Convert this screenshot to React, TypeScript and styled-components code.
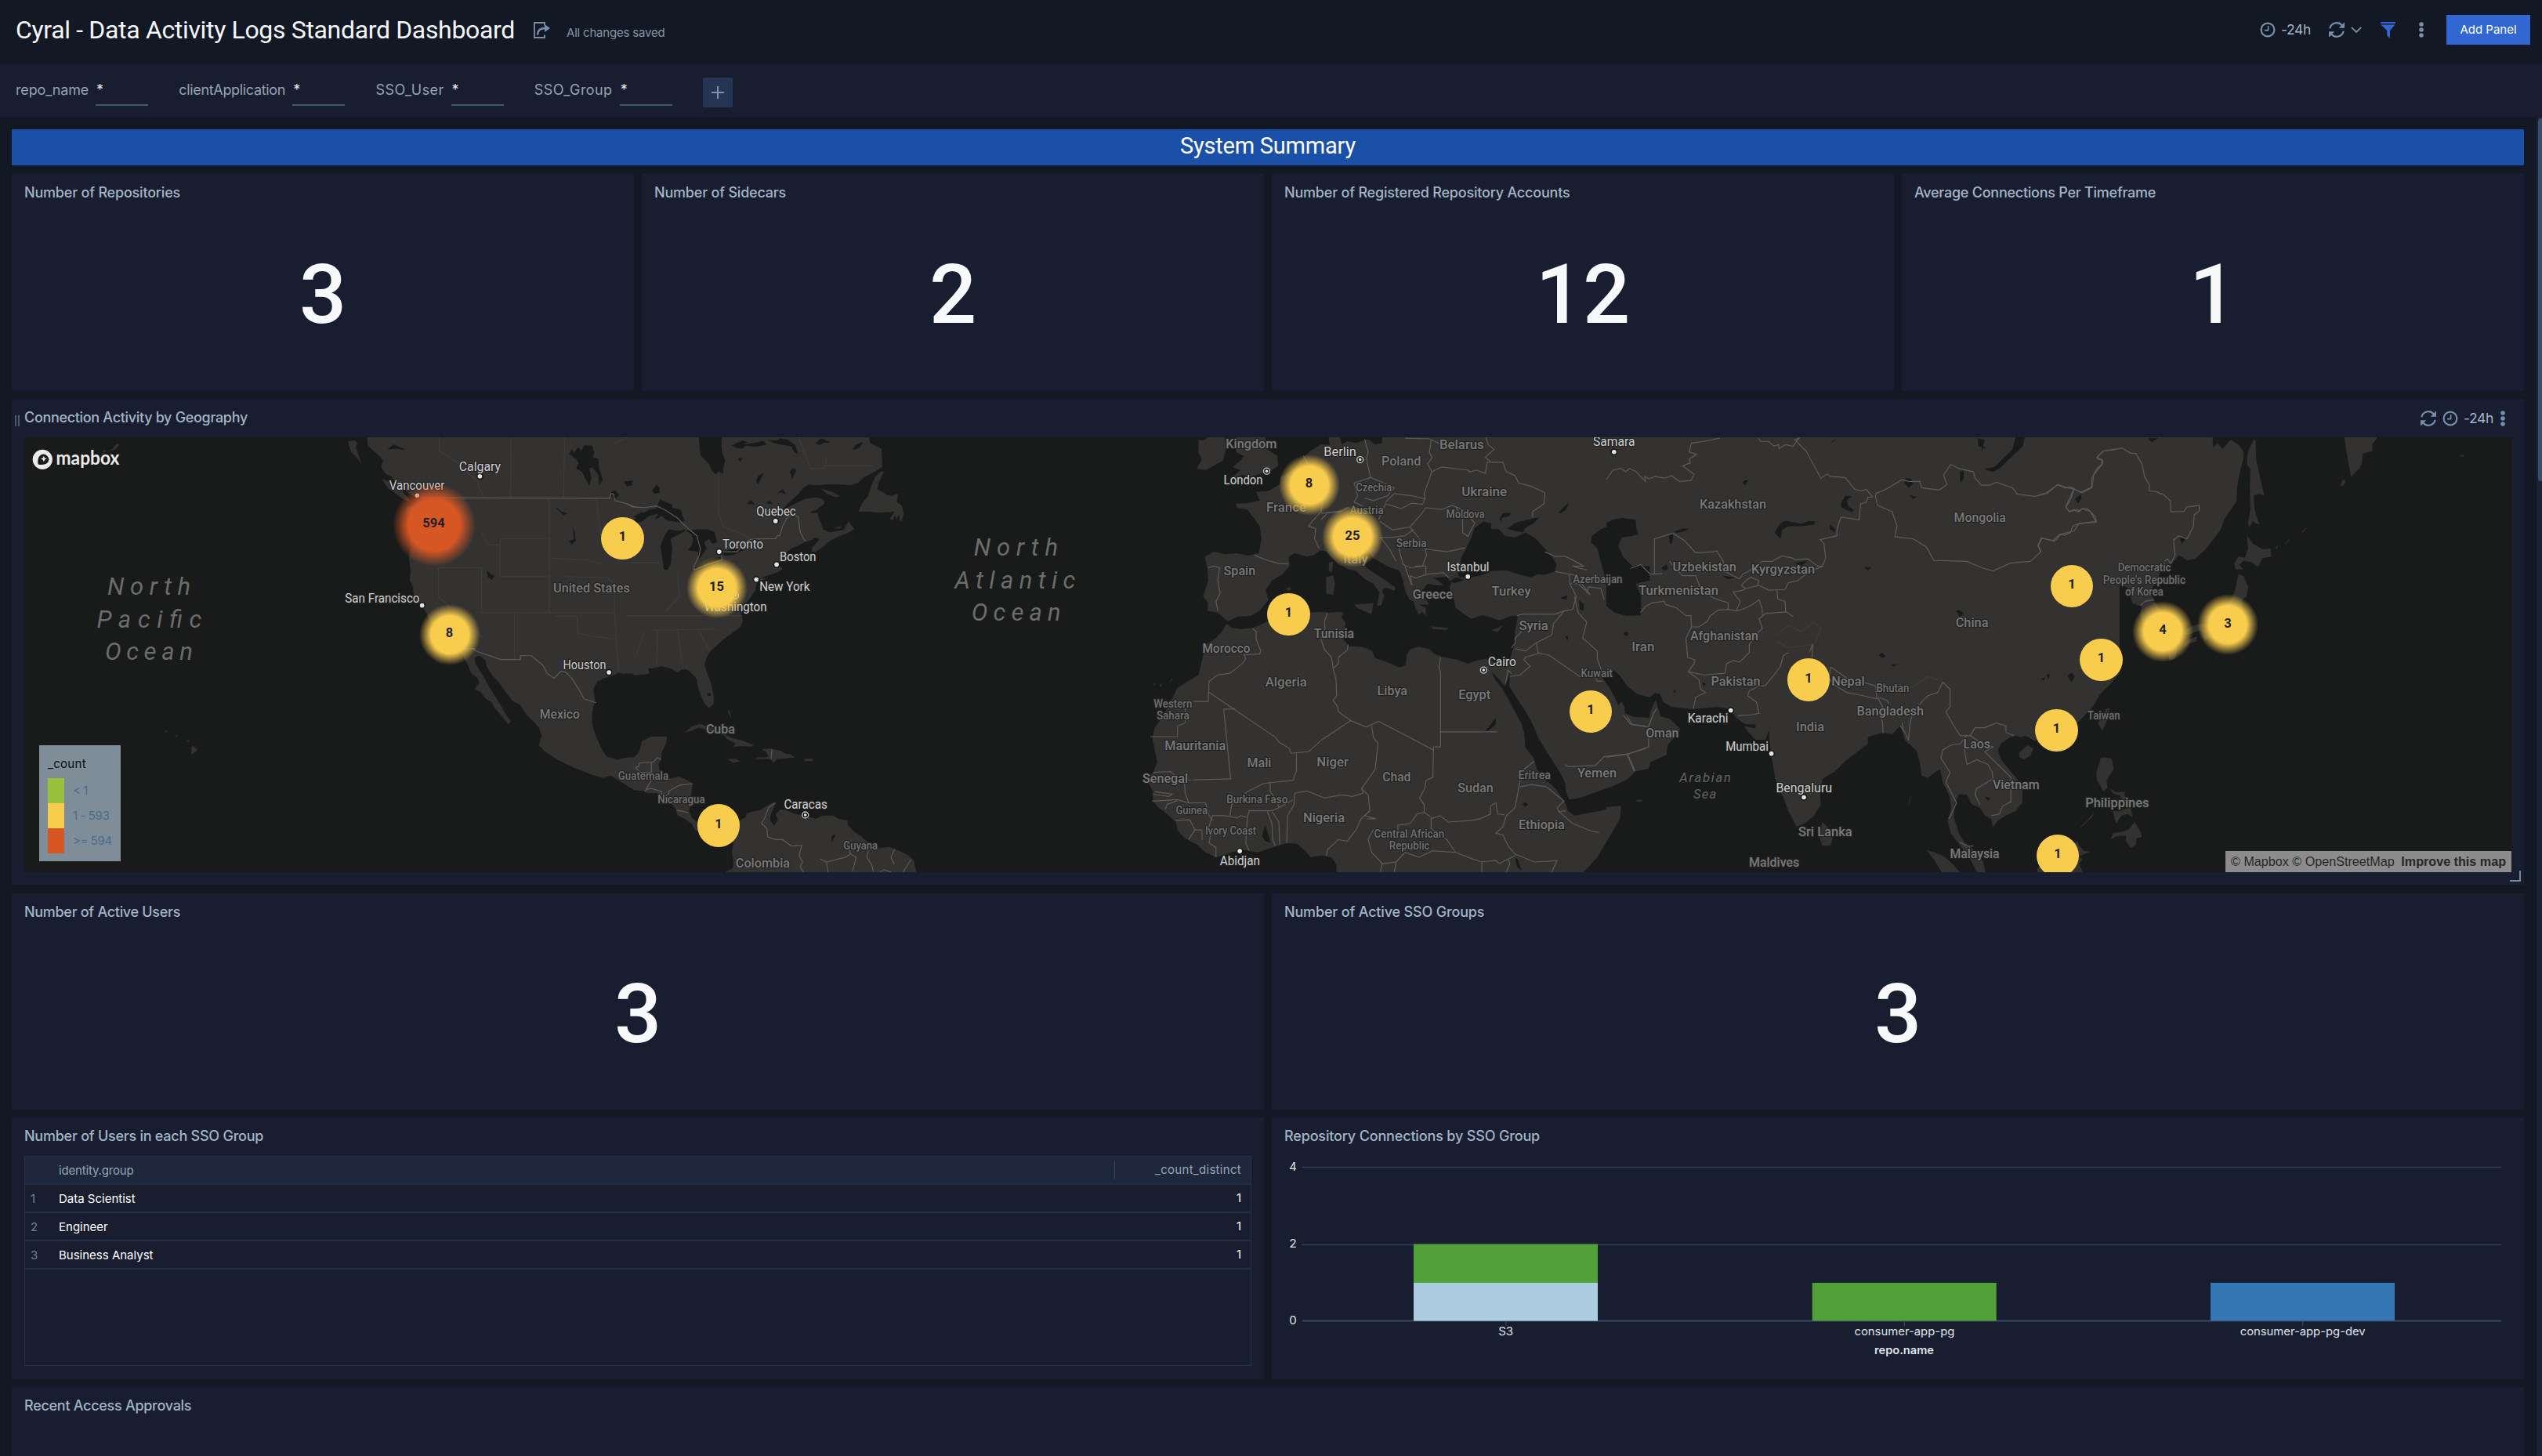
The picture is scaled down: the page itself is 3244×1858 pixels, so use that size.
import React from "react";
import styled, { createGlobalStyle } from "styled-components";

const SANS = `Inter, "Liberation Sans", Arial, sans-serif`;
const c = {
  page: "#121824",
  panel: "#181d2f",
  title: "#a3b5c6",
  icon: "#778fa8",
  blue: "#3266d1",
  water: "#191a1a",
  land: "#343231",
  border: "#5c5b5a",
  yellow: "#f8cc4d",
  orange: "#d75724",
};

const GlobalStyle = createGlobalStyle`
  * { box-sizing: border-box; }
  html, body { margin: 0; background: ${c.page}; }
  body { font-family: ${SANS}; overflow: hidden; }
`;

const Page = styled.div`
  width: 3244px;
  height: 1858px;
  overflow: hidden;
  display: flex;
  flex-direction: column;
  background: ${c.page};
`;

/* ---------- header ---------- */
const Header = styled.header`
  height: 82px;
  flex: none;
  display: flex;
  align-items: center;
  padding: 0 15px 6px 20px;
`;
const Heading = styled.h1`
  margin: 0;
  font-family: Roboto, ${SANS};
  font-size: 32px;
  font-weight: 400;
  line-height: 40px;
  letter-spacing: -0.34px;
  color: #f4f6f9;
  width: 661px;
  white-space: nowrap;
`;
const Saved = styled.span`
  margin: 7px 0 0 21px;
  font-size: 15px;
  line-height: 20px;
  letter-spacing: -0.2px;
  color: #8494a5;
  white-space: nowrap;
`;
const Tools = styled.div`
  margin-left: auto;
  display: flex;
  align-items: center;
`;
const Range = styled.span<{ $w: number }>`
  width: ${(p) => p.$w}px;
  font-size: 17.5px;
  line-height: 22px;
  letter-spacing: -0.4px;
  color: ${c.title};
  white-space: nowrap;
`;
const Icon = styled.svg<{ $mr?: number }>`
  display: block;
  flex: none;
  margin-right: ${(p) => p.$mr ?? 0}px;
  overflow: visible;
`;
const AddPanel = styled.button`
  width: 107px;
  height: 38px;
  padding: 0 0 1px;
  border: 0;
  background: ${c.blue};
  color: #fff;
  font: 400 15px/20px ${SANS};
`;

/* ---------- filters ---------- */
const Filters = styled.div`
  height: 67px;
  flex: none;
  display: flex;
  padding: 17px 0 0 20px;
  background: ${c.panel};
`;
const Filter = styled.label<{ $w: number; $ls: number }>`
  width: ${(p) => p.$w}px;
  display: flex;
  justify-content: space-between;
  margin-right: 39.25px;
  height: 36px;
  font-size: 18px;
  line-height: 32px;
  letter-spacing: ${(p) => p.$ls}px;
  color: #94a3b3;
`;
const FilterValue = styled.span`
  width: 67px;
  border-bottom: 2px solid #3d5a73;
  padding-left: 1px;
  color: #e4e9ee;
`;
const Plus = styled.button`
  width: 38px;
  height: 38px;
  border: 0;
  padding: 0;
  display: flex;
  align-items: center;
  justify-content: center;
  background: #263553;
`;

/* ---------- board ---------- */
const Body = styled.main`
  flex: 1;
  min-height: 0;
  display: flex;
`;
const Board = styled.div`
  flex: 1;
  display: flex;
  flex-direction: column;
  gap: 10px;
  padding: 16px 16px 0 15px;
`;
const Banner = styled.div`
  height: 46px;
  flex: none;
  margin-bottom: 1px;
  background: #1b50a9;
  color: #fff;
  font-family: Roboto, ${SANS};
  font-size: 29px;
  line-height: 43px;
  letter-spacing: -0.23px;
  text-align: center;
`;
const Row = styled.div<{ $h: number; $mb?: number }>`
  height: ${(p) => p.$h}px;
  margin-bottom: ${(p) => p.$mb ?? 0}px;
  flex: none;
  display: flex;
  gap: 10px;
`;
const Panel = styled.section`
  flex: 1 1 0;
  min-width: 0;
  position: relative;
  display: flex;
  flex-direction: column;
  padding: 0 16px;
  background: ${c.panel};
`;
const PanelHead = styled.div`
  height: 49px;
  flex: none;
  display: flex;
  justify-content: space-between;
  padding-bottom: 2px;
`;
const PanelTitle = styled.h2<{ $ls?: number }>`
  margin: 0;
  font-size: 18px;
  font-weight: 500;
  line-height: 47px;
  letter-spacing: ${(p) => p.$ls ?? -0.25}px;
  color: ${c.title};
  white-space: nowrap;
`;
const PanelTools = styled.div`
  display: flex;
  align-items: center;
  padding: 2px 8px 0 0;
`;
const Big = styled.div`
  font-family: Roboto, ${SANS};
  font-size: 106px;
  font-weight: 500;
  line-height: 120px;
  margin-top: 45px;
  text-align: center;
  color: #f7f9fb;
`;
const Track = styled.div`
  width: 7px;
  padding: 2px 0 0 2px;
  background: #1c2236;
`;
const Thumb = styled.div`
  height: 463px;
  border-radius: 4px 0 0 4px;
  background: #34506b;
`;

/* ---------- table ---------- */
const Table = styled.div`
  height: 268px;
  border: 1px solid #24314a;
  font-size: 15px;
`;
const Tr = styled.div<{ $head?: boolean }>`
  display: flex;
  align-items: center;
  height: 36px;
  padding-right: 12px;
  border-bottom: 2px solid #222d43;
  background: ${(p) => (p.$head ? "#1e273b" : "transparent")};
  color: ${(p) => (p.$head ? "#94a5b6" : "#fff")};
`;
const No = styled.span`
  width: 43px;
  padding-left: 7px;
  color: #6f8294;
`;
const Cell = styled.span<{ $ls?: number }>`
  letter-spacing: ${(p) => p.$ls ?? 0}px;
`;
const CountCell = styled.span<{ $head?: boolean }>`
  margin-left: auto;
  width: 162px;
  line-height: 24px;
  letter-spacing: ${(p) => (p.$head ? 0.3 : 0)}px;
  text-align: right;
  border-left: 1px solid ${(p) => (p.$head ? "#34495f" : "transparent")};
`;

/* ---------- map ---------- */
const MapBox = styled.div`
  position: relative;
  height: 555px;
  overflow: hidden;
  background: ${c.water};
`;
const MapSvg = styled.svg`
  display: block;
  width: 3174px;
  height: 555px;
`;
const Pin = styled.div<{ $x: number; $y: number; $r: number; $c: string; $glow: boolean }>`
  position: absolute;
  left: ${(p) => p.$x - 31 - p.$r}px;
  top: ${(p) => p.$y - 558 - p.$r}px;
  width: ${(p) => p.$r * 2}px;
  height: ${(p) => p.$r * 2}px;
  border-radius: 50%;
  background: ${(p) =>
    p.$glow
      ? `radial-gradient(circle closest-side, ${p.$c} 62%, ${p.$c}00 100%)`
      : p.$c};
  display: flex;
  align-items: center;
  justify-content: center;
  padding-bottom: 3px;
  font: 700 16.5px/20px Roboto, ${SANS};
  color: #1d2226;
`;
const Legend = styled.div`
  position: absolute;
  left: 19px;
  bottom: 14px;
  width: 104px;
  height: 148px;
  padding: 13px 11px 0;
  background: #7f8d99;
  font-size: 15px;
  color: #0a0d12;
`;
const LegendTitle = styled.div`
  height: 29px;
  line-height: 22px;
  letter-spacing: 0.3px;
`;
const LegendRow = styled.div<{ $c: string }>`
  height: 32px;
  line-height: 32px;
  padding-left: 11px;
  border-left: 21px solid ${(p) => p.$c};
  letter-spacing: -0.4px;
  color: #4d6b8b;
  white-space: nowrap;
`;
const Credit = styled.div`
  position: absolute;
  right: 0;
  bottom: 0;
  width: 365px;
  height: 27px;
  padding: 0 7px;
  display: flex;
  justify-content: space-between;
  background: #8b8c8b;
  font: 400 16.15px/26px "Liberation Sans", Arial, sans-serif;
  color: #262727;
  white-space: nowrap;
`;
const Logo = styled.svg`
  position: absolute;
  left: 8px;
  top: 13px;
`;
const Grip = styled.span`
  position: absolute;
  left: 4px;
  top: 21px;
  width: 6px;
  height: 14px;
  border: solid #465b70;
  border-width: 0 2px;
`;
const Resize = styled.span`
  position: absolute;
  right: 4px;
  bottom: 4px;
  width: 14px;
  height: 14px;
  border: solid #6f8ba3;
  border-width: 0 2px 2px 0;
`;

/* Each map tile has its own grid: origin x, then horizontal units per pixel. */
type TileKey = "A" | "B" | "C" | "D" | "E";
const KY = 1 / 2.45;
const tiles: Record<TileKey, [number, number]> = {
  A: [0, 820 / 1568],
  B: [800, 700 / 1568],
  C: [1400, 700 / 1568],
  D: [2050, 650 / 1568],
  E: [2600, 644 / 1568],
};
const keys: TileKey[] = ["A", "B", "C", "D", "E"];
const tx = (t: TileKey, x: number) => tiles[t][0] + x * tiles[t][1];
const ty = (y: number) => 500 + y * KY;

const land: Record<TileKey, string[]> = {
  A: [
    "895,130 898,170 906,178 912,185 925,200 935,215 930,235 940,255 955,265 970,290 985,305 1000,320 1015,330 1018,350 1000,360 995,355 992,370 996,400 1000,440 1003,480 998,520 1002,560 1000,590 1008,610 1010,640 1020,660 1030,672 1040,690 1048,715 1060,740 1085,775 1120,810 1130,825 1140,850 1150,880 1165,895 1170,910 1158,930 1175,940 1185,960 1200,970 1208,990 1225,1015 1240,1040 1247,1030 1235,1010 1222,980 1212,960 1200,935 1190,915 1180,890 1170,870 1160,850 1158,830 1170,825 1185,840 1188,860 1200,885 1215,905 1235,940 1250,965 1270,980 1285,1010 1305,1035 1315,1050 1322,1075 1315,1105 1330,1125 1360,1150 1400,1175 1440,1195 1470,1207 1490,1200 1510,1215 1540,1240 1568,1247 1568,1090 1558,1130 1545,1143 1530,1143 1505,1150 1480,1140 1470,1120 1455,1080 1445,1040 1445,1000 1452,965 1448,930 1458,905 1475,895 1500,885 1510,878 1522,882 1540,878 1548,886 1568,884 1568,130",
    "850,155 865,152 873,160 868,172 874,195 883,225 872,208 858,190 852,170",
    "932,272 945,278 965,290 985,315 1003,345 985,337 965,318 948,302 940,290",
    "468,1105 482,1118 475,1128 466,1133",
    "275,178 285,162 292,165 282,180 264,186",
    "248,196 255,180 259,186",
    "402,1060 407,1060 407,1064 402,1064",
    "428,1074 432,1074 432,1079 428,1079",
    "456,1090 462,1090 462,1094 456,1094",
  ],
  B: [
    "0,130 205,130 208,180 212,200 235,225 243,248 255,258 262,248 275,258 275,240 281,215 272,190 270,165 272,130 690,130 695,160 728,178 730,235 700,255 680,265 660,285 640,292 610,290 570,290 545,292 520,290 505,300 490,320 475,335 460,350 445,368 430,388 455,365 480,350 510,335 540,330 560,335 565,350 550,362 540,370 525,375 530,380 545,378 548,395 555,410 560,430 580,440 600,435 620,432 625,420 635,405 640,415 650,428 635,440 610,450 590,460 575,470 560,485 540,500 528,500 530,485 545,470 550,460 540,455 525,465 510,470 490,480 470,490 455,505 440,520 435,540 445,555 430,565 410,572 385,580 400,585 380,590 370,600 368,620 355,640 345,655 335,665 325,690 332,715 325,735 300,755 275,775 250,800 235,815 225,840 222,855 230,880 240,910 248,950 248,975 235,988 222,975 212,950 203,925 200,900 190,885 175,870 160,866 145,877 125,865 100,858 75,864 60,865 65,880 50,885 30,878 0,882",
    "0,1143 20,1145 35,1125 45,1090 70,1078 115,1078 112,1100 100,1125 98,1150 90,1165 95,1185 90,1205 110,1210 150,1203 175,1215 188,1225 185,1250 182,1290 178,1310 185,1330 200,1345 225,1365 240,1376 270,1368 300,1352 340,1330 342,1318 360,1312 380,1308 400,1295 415,1285 425,1285 420,1300 412,1320 410,1340 420,1355 430,1340 425,1320 440,1305 455,1308 470,1315 490,1322 510,1325 540,1335 560,1325 590,1325 605,1335 630,1340 632,1355 650,1375 670,1390 690,1410 700,1425 720,1427 750,1423 780,1435 805,1450 820,1465 830,1515 270,1515 290,1495 303,1490 305,1470 300,1440 305,1410 285,1390 240,1388 210,1378 195,1370 185,1350 165,1335 145,1325 140,1305 125,1285 100,1265 85,1255 60,1255 45,1247 20,1245 0,1222",
    "165,1065 185,1046 210,1038 240,1050 270,1065 300,1082 330,1090 362,1104 355,1110 330,1108 303,1110 312,1100 285,1085 280,1075 250,1065 225,1055 205,1050 185,1060",
    "385,1118 410,1115 440,1123 455,1132 465,1132 480,1143 455,1146 430,1148 420,1160 410,1148 370,1148 368,1143 398,1143 405,1138 396,1124",
    "288,1148 310,1147 325,1155 305,1160",
    "508,1147 532,1147 532,1155 508,1155",
    "725,250 735,250 720,285 715,305 735,315 742,322 755,325 775,320 772,345 785,355 792,380 785,405 778,400 780,382 770,398 766,385 760,402 752,396 765,375 720,378 690,375 662,375 672,350 690,325 700,290 710,265",
    "555,303 580,310 612,327 595,328 570,318",
    "590,427 610,420 612,427",
    "288,992 294,998 298,1022 292,1010",
  ],
  C: [
    "370,725 385,738 410,742 445,738 480,722 515,705 560,700 600,690 640,688 665,690 690,688 705,690 698,705 710,720 708,740 695,755 705,775 720,795 760,798 785,810 795,832 830,845 865,862 882,855 885,825 895,805 920,797 950,805 965,820 985,828 1030,838 1060,850 1085,840 1110,835 1140,845 1165,850 1180,850 1185,880 1176,915 1160,925 1190,985 1200,1010 1215,1040 1222,1070 1224,1110 1250,1145 1258,1180 1290,1215 1310,1240 1330,1270 1342,1290 1345,1308 1365,1325 1400,1318 1440,1310 1470,1300 1498,1294 1495,1335 1460,1400 1430,1455 1380,1515 683,1515 685,1480 670,1455 640,1450 610,1455 595,1435 570,1412 540,1412 500,1425 460,1440 420,1432 380,1442 340,1455 310,1440 285,1415 250,1395 230,1370 225,1345 195,1315 175,1300 160,1280 158,1245 150,1228 140,1210 160,1190 172,1160 165,1120 158,1080 165,1050 190,1010 210,970 230,925 260,905 290,885 300,840 310,790 340,770 360,745",
    "660,130 665,165 640,165 610,185 585,210 570,235 545,255 525,265 522,290 490,310 455,313 465,340 430,348 397,350 400,362 430,368 445,390 465,420 470,460 462,505 430,512 400,505 365,508 335,500 308,515 315,550 318,590 303,640 318,660 315,685 345,690 360,705 375,718 400,703 440,700 465,685 490,650 482,620 500,590 530,570 550,545 548,515 565,505 600,515 620,510 640,495 655,500 690,540 720,555 740,560 765,585 790,600 808,628 800,668 812,668 820,640 815,620 825,612 850,622 853,612 825,590 790,565 765,545 745,515 725,490 735,475 760,480 790,520 830,545 865,560 875,590 880,620 893,650 905,655 910,675 920,697 928,688 940,700 940,675 920,665 950,665 935,640 930,620 945,600 970,605 990,605 975,590 960,582 1000,578 1012,598 1008,610 1010,625 1020,650 1025,675 1050,695 1070,710 1100,698 1125,705 1150,715 1185,700 1203,700 1195,745 1195,780 1185,820 1176,850 1180,885 1178,920 1195,950 1225,1000 1245,1040 1262,1085 1300,1150 1320,1185 1337,1220 1340,1250 1350,1275 1380,1270 1430,1250 1470,1235 1510,1215 1530,1190 1580,1170 1580,130 815,130 815,160 795,165 775,148 740,160 715,155 700,165 690,130",
    "290,150 305,152 330,130 365,130 368,180 360,215 335,230 310,245 285,240 300,210 290,190",
    "395,130 480,130 485,178 515,200 518,230 500,245 470,255 440,265 415,260 385,270 410,245 388,235 410,215 420,200 398,190",
    "662,535 675,530 672,565 663,560",
    "655,580 675,573 680,600 675,635 655,630",
    "735,665 790,660 785,695 745,677",
    "955,733 1005,738 1000,744 960,742",
    "1128,745 1160,732 1145,752",
    "540,617 550,610 556,617 548,622",
    "160,912 168,912 164,920",
    "178,915 186,910 182,925",
    "206,908 216,893 214,903",
    "1542,1276 1560,1276 1558,1281 1545,1281",
  ],
  D: [
    "0,130 1580,130 1580,880 1550,915 1520,945 1500,980 1470,1015 1450,1035 1400,1062 1320,1092 1290,1075 1275,1080 1260,1075 1240,1082 1215,1100 1205,1120 1215,1150 1240,1180 1265,1210 1282,1240 1280,1285 1260,1310 1230,1325 1205,1340 1190,1362 1185,1335 1165,1325 1150,1300 1125,1290 1110,1260 1085,1258 1072,1290 1070,1330 1085,1380 1100,1405 1140,1440 1160,1470 1170,1515 1140,1500 1120,1460 1090,1420 1060,1380 1050,1340 1062,1300 1055,1260 1035,1220 1028,1180 1010,1190 990,1207 970,1200 965,1160 955,1122 920,1090 905,1045 880,1070 850,1065 820,1075 805,1080 805,1100 780,1120 740,1150 705,1185 665,1210 658,1260 660,1290 640,1325 610,1350 585,1360 560,1310 545,1270 520,1210 510,1150 503,1100 500,1058 490,1088 460,1088 435,1062 425,1045 458,1052 460,1040 425,1038 400,1020 385,1000 370,990 340,985 270,992 240,990 200,985 175,970 165,945 150,942 130,958 95,945 60,930 35,910 20,890 0,875",
    "0,925 20,955 38,985 45,965 52,975 55,1003 80,1015 110,1015 135,1000 152,962 158,985 168,1015 195,1022 228,1055 205,1085 188,1105 185,1135 135,1158 130,1178 90,1187 65,1210 30,1220 0,1232",
    "0,1298 44,1294 40,1330 20,1370 0,1405",
    "665,1345 680,1360 697,1395 690,1418 665,1420 655,1390",
    "985,1432 1010,1440 1035,1450 1060,1470 1100,1515 1040,1515 1010,1465",
    "1270,1130 1295,1105 1315,1115 1305,1138 1285,1150 1272,1142",
    "92,1276 110,1276 106,1281 95,1281",
    "930,1300 935,1260 936,1275",
  ],
  E: [
    "0,130 545,130 545,175 560,160 575,178 600,150 625,165 640,185 640,210 632,240 622,290 618,345 600,370 580,400 570,430 545,465 520,495 490,522 465,527 440,510 420,535 395,545 380,568 370,595 350,625 365,655 385,690 400,730 400,765 375,785 340,790 330,760 325,720 320,690 325,672 295,660 290,640 300,620 275,610 255,600 245,615 215,638 210,628 230,605 200,600 175,615 160,640 160,680 178,688 205,668 215,685 240,685 225,692 195,705 165,745 190,780 205,810 225,850 215,905 190,935 175,975 150,1005 110,1035 60,1065 0,1100",
    "655,185 670,155 671,148 678,152 680,210 690,260 705,325 690,318 672,325 675,370 690,415 680,412 670,405 658,425 655,410 662,370 660,300 662,240 652,230 652,205",
    "650,448 670,475 700,492 725,490 727,515 700,520 685,548 665,532 640,528 628,540 640,555 615,555 612,535 625,515 645,518 655,490",
    "625,570 640,575 655,610 650,640 636,650 636,680 625,720 600,760 560,755 520,778 505,745 470,760 450,755 480,732 510,725 540,730 570,700 600,650 615,620 620,590",
    "470,775 495,765 495,780 475,786 455,798 458,785",
    "405,800 430,790 436,805 428,835 410,840",
    "952,130 1060,130 1052,150 1040,165 1042,185 1012,193 1008,225 1000,240 975,265 968,230 960,185",
    "942,295 948,275 958,278 952,292",
    "821,437 836,424 836,427 824,440",
    "768,475 780,463 784,462 772,475",
    "738,492 748,476 746,488",
    "1314,198 1326,198 1324,202 1317,202",
    "215,990 225,990 218,1025 202,1060 188,1035",
    "197,1145 210,1143 232,1148 237,1180 215,1215 218,1238 205,1250 195,1230 185,1215 183,1190",
    "225,1240 245,1252 275,1250 270,1258 285,1290 270,1285 255,1262 235,1256",
    "235,1310 255,1312 270,1305 290,1300 295,1330 280,1320 262,1325 245,1350 238,1325",
    "228,1400 235,1380 265,1375 285,1368 302,1345 320,1375 325,1392 308,1395 305,1418 290,1425 275,1405 275,1388 245,1390",
    "127,1367 160,1335 176,1312 170,1330 140,1358",
    "95,1415 125,1405 130,1420 145,1435 167,1437 130,1452 140,1462 130,1475 145,1515 0,1515 0,1490",
  ],
};

const lakes: Record<TileKey, string[]> = {
  A: [
    "1425,167 1445,168 1450,190 1447,205 1460,210 1462,240 1471,275 1462,292 1460,260 1445,235 1438,240 1443,270 1438,293 1430,275 1420,250 1406,240 1412,222 1405,210 1390,195 1395,178 1400,192 1412,172 1418,185",
    "1188,558 1198,570 1207,575 1200,588 1190,578",
    "945,180 960,165 980,175 990,182 970,178",
    "1355,358 1370,375 1386,380 1375,385 1362,370",
    "1398,420 1403,440 1405,465 1396,478 1388,468 1400,460",
    "1522,280 1545,278 1540,292 1530,295",
    "1488,318 1500,308 1512,322 1498,335",
    "1545,390 1568,375 1568,405",
  ],
  B: [
    "10,410 25,395 45,380 65,368 85,365 90,350 95,335 110,345 130,352 130,362 155,370 158,385 165,405 150,408 130,405 110,400 100,388 80,400 90,380 60,390 45,405 20,412",
    "96,480 110,445 120,430 150,435 170,430 160,440 140,450 125,460 130,490 125,540 115,558 105,555 100,510",
    "168,435 200,430 230,430 250,438 258,470 245,475 235,460 220,470 228,490 215,510 207,522 203,500 175,495 185,480 190,465 185,445",
    "192,550 215,535 245,522 270,515 272,525 245,540 215,555 195,560",
    "270,500 300,492 320,490 337,478 332,495 305,510 280,512",
    "300,168 330,152 345,158 330,165 365,160 390,153 400,165 370,172 340,168 330,178 310,175",
    "400,150 430,152 440,145 460,150 480,165 490,195 480,190 470,170 440,165 420,160",
    "540,160 555,145 582,158 560,160 550,168",
    "645,180 655,165 675,157 665,175 648,182",
    "370,280 375,262 392,254 385,268 375,290",
    "465,250 475,238 485,245 478,260 472,275 470,260",
    "430,318 445,303 455,320 440,315",
    "72,308 85,290 94,300 93,316 78,318",
    "0,285 18,290 0,296",
    "343,350 355,338 365,352",
    "400,348 408,340 418,352",
    "318,208 330,205 325,220",
    "230,942 240,942 240,950 232,952",
    "585,1390 598,1382 592,1395 585,1408",
    "410,1330 425,1322 432,1338 420,1357",
  ],
  C: [
    "1040,520 1055,490 1070,455 1080,425 1105,405 1128,412 1125,428 1150,430 1165,450 1195,455 1225,440 1255,460 1280,490 1300,515 1314,540 1308,562 1280,572 1260,570 1240,580 1205,570 1170,558 1130,560 1095,575 1065,580 1035,580 1030,560 1040,535",
    "1150,398 1160,380 1185,378 1175,390 1160,392 1155,405",
    "1172,428 1195,410 1230,400 1264,392 1250,410 1225,425 1218,440 1195,435",
    "1005,595 1025,580 1050,588 1025,598",
    "1415,450 1440,430 1465,418 1475,400 1500,395 1535,400 1540,425 1535,450 1500,455 1490,480 1500,510 1515,530 1530,545 1580,545 1580,590 1540,600 1555,640 1555,698 1515,700 1475,680 1455,655 1455,640 1475,620 1455,600 1450,570 1440,530 1430,490 1412,470",
    "1443,892 1462,870 1480,872 1495,888 1515,920 1545,945 1580,955 1580,1020 1530,1015 1510,1005 1507,985 1500,968 1490,980 1480,955 1462,920",
    "1128,875 1150,900 1166,922 1180,880 1178,920 1195,950 1225,1000 1245,1040 1262,1085 1300,1150 1320,1185 1337,1220 1340,1250 1350,1278 1340,1290 1330,1270 1310,1240 1280,1210 1258,1180 1248,1145 1226,1115 1222,1070 1215,1040 1200,1010 1185,980 1160,930 1138,900",
    "1318,378 1335,360 1350,345 1340,370 1325,380",
    "1325,645 1345,635 1342,650",
    "1378,652 1392,665 1390,685 1380,680",
    "1105,1068 1125,1040 1140,1018 1140,1040 1120,1058",
    "480,1355 490,1385 496,1410 482,1405 472,1390",
    "1195,1455 1204,1465 1213,1497 1200,1485",
    "1216,1292 1222,1282 1232,1290 1224,1298",
    "1338,765 1346,762 1346,778",
    "1508,752 1520,752 1514,762",
  ],
  D: [
    "0,410 20,400 50,395 90,400 92,425 98,447 50,450 30,475 45,500 50,515 80,545 105,540 120,575 120,592 95,590 80,585 82,610 105,650 105,690 60,700 25,690 0,670",
    "192,450 206,442 205,458 200,478 195,470",
    "208,437 235,428 252,428 238,437 215,441",
    "518,440 535,412 550,403 600,412 620,405 642,405 640,415 600,420 560,420 540,432 538,460 525,448",
    "580,535 620,528 600,545",
    "688,415 705,430 703,440 688,428",
    "722,350 735,325 755,325 740,340 745,358 762,370 755,376 725,362",
    "918,285 922,270 938,272 944,288 930,300",
    "930,322 955,328 945,335",
    "1262,130 1290,130 1282,170 1250,200 1210,240 1190,250 1163,242 1195,235 1220,210 1250,180",
    "1088,250 1100,246 1100,270 1090,286",
    "1143,145 1165,150 1160,168 1168,178 1158,175 1158,195 1155,172 1145,170",
    "418,285 425,278 437,275 428,292",
    "1447,332 1462,320 1458,340 1450,348",
    "793,548 818,548 805,558",
    "1076,685 1085,682 1100,692 1088,703",
    "838,822 850,816 860,828 848,832",
    "874,852 894,852 885,860",
    "1420,890 1432,878 1442,890 1432,908",
    "1338,898 1350,893 1348,903",
    "1355,885 1364,882 1360,898",
    "358,575 395,580 375,586",
    "170,550 185,540 190,552 178,560",
    "690,160 708,146 700,155",
    "52,755 62,749 68,760 60,764",
    "1165,1265 1182,1270 1176,1280",
    "205,935 215,930 210,942",
    "295,908 306,912 300,922",
  ],
  E: [
    "345,145 375,145 355,157",
    "118,335 135,322 138,332 126,348",
    "442,455 460,460 450,475",
    "95,890 106,878 116,890 106,908",
    "12,898 22,893 22,902",
    "30,885 38,882 36,898",
  ],
};

const borders: Record<TileKey, string[]> = {
  A: [
    "1018,331 1488,333 1490,318 1497,320 1500,340 1530,350 1550,360 1568,362",
    "1128,805 1158,803 1160,810 1222,837 1270,837 1270,825 1297,825 1325,855 1335,880 1352,896 1368,874 1380,876 1395,895 1415,935 1425,960 1455,972",
  ],
  B: [
    "0,350 15,360 50,362 85,357 110,370 145,395 160,412 180,432 200,450 210,490 207,510 192,545 192,557 230,540 272,525 270,512",
    "275,500 315,500 345,465 360,460 425,459 430,450 437,450 445,420 460,390 475,385 490,390 495,435 505,460 512,467",
    "98,1150 88,1143 75,1158 35,1160 35,1170 25,1175 38,1190 70,1190 70,1160",
    "70,1190 72,1210 55,1243 70,1240 100,1250 100,1258 120,1258 120,1248 150,1230 188,1225",
    "55,1243 52,1250",
    "142,1308 175,1315",
    "425,1285 405,1300 395,1330 385,1350 400,1365 403,1392 425,1400 445,1400 470,1420 500,1418 492,1450 502,1470 495,1485 505,1501",
    "552,1460 570,1470 625,1455 640,1445 630,1420 632,1400",
    "570,1470 575,1501",
    "640,1445 655,1455 645,1501",
    "692,1425 686,1455 700,1480 705,1501",
    "765,1430 755,1455 765,1478",
    "790,1501 812,1462",
    "725,1501 735,1494 755,1501",
    "415,1118 412,1148",
  ],
  C: [
    "450,510 465,518 490,528 520,537 548,538",
    "318,550 335,545 350,550 345,590 352,630 340,655 345,685",
    "545,262 570,290 600,310 645,340 640,375 615,405 605,420 625,428 622,460 635,490",
    "590,200 605,230 600,270 610,300",
    "640,380 700,372 720,360",
    "765,148 775,190 770,210 782,268 735,285 745,325 735,345 760,358",
    "782,268 820,285 850,300 830,325 790,340 765,332",
    "825,345 850,318 900,325 938,335 930,352 900,348 870,365 825,350 805,400",
    "808,405 845,432 895,422 925,385 940,362",
    "700,375 660,378 640,400",
    "955,150 950,190 958,205 945,225 957,250 935,320 938,335",
    "880,145 950,147 985,165",
    "957,250 985,235 1060,245 1065,250 1085,245 1110,255 1115,220 1160,220 1170,250 1195,262 1205,285 1240,295 1280,315 1278,350 1245,375 1245,392",
    "1125,218 1110,205 1135,180 1118,165 1112,142",
    "940,362 985,368 1015,355 1045,368 1080,410 1060,452 1045,440 1045,395 1025,360",
    "895,425 935,475 942,492 1000,500 1052,488",
    "810,455 845,455 880,450 905,430",
    "810,455 835,490 855,530",
    "935,475 942,510 930,545 895,550 875,540 865,500 860,455",
    "880,545 900,605",
    "900,605 895,575 910,582 945,570 990,565 1005,580",
    "910,545 940,545 940,568",
    "1280,500 1310,515 1340,515 1375,535 1390,545 1360,545 1400,558",
    "1310,562 1350,570 1352,600 1370,640 1360,680 1335,685 1310,695 1215,695 1200,700",
    "1352,600 1385,600 1410,635 1380,605 1370,575 1350,570",
    "1400,630 1405,610 1440,615 1450,650",
    "1365,640 1375,690 1400,720 1388,770 1430,810 1430,835 1445,880",
    "1335,685 1305,725 1300,760 1255,785 1225,810 1195,803",
    "1255,785 1262,818 1225,830 1220,838 1238,858 1210,885 1180,890",
    "1262,818 1290,822 1380,890 1425,893 1430,905 1445,905",
    "1185,800 1195,785 1195,770 1215,748",
    "1168,912 1175,870 1185,880",
    "1338,1165 1345,1172 1425,1168 1450,1140 1515,1133 1568,1115",
    "1515,1133 1535,1185",
    "1515,1015 1530,1040 1568,1045",
    "445,740 455,750 455,775 468,810 465,820 420,822 425,835 415,850 380,880 345,885 320,905 318,968 275,968",
    "252,990 252,1035 230,1045 230,1078 152,1078",
    "318,938 510,1080 520,1095 550,1115 555,1130 605,1125 640,1090 725,1028 690,1000 688,985 675,965 685,950 683,900 675,865 670,830 650,805 640,775",
    "658,692 650,720 652,740 640,770",
    "675,865 690,850 690,830 715,808 718,790",
    "395,992 362,992 382,1210 275,1213",
    "160,1190 210,1187 235,1210 270,1215",
    "570,1130 570,1185 560,1215 495,1222 475,1225 430,1250 385,1290 380,1325",
    "982,830 978,860 982,880 982,1110 962,1110 962,1120 805,1030 770,1048 725,1028",
    "982,1063 1145,1063",
    "785,1045 790,1080 803,1100 795,1180 757,1240 760,1255 730,1265 700,1260 650,1270 600,1248 565,1255 563,1290 545,1325 542,1410",
    "755,1240 775,1260 780,1310 765,1325 797,1335 772,1335",
    "962,1110 960,1205 940,1215 937,1240 922,1270 935,1290 935,1315 915,1320 895,1350 860,1355 860,1375",
    "780,1310 755,1335 740,1370 715,1405 690,1400 660,1430 655,1450",
    "790,1368 775,1400 785,1440 815,1475 810,1501",
    "815,1475 855,1470 850,1501",
    "855,1470 880,1440 920,1455 960,1435 1025,1440",
    "935,1315 955,1330 955,1365 1000,1400 1025,1440 1060,1455 1100,1470 1100,1501",
    "955,1335 980,1325 1005,1345 1070,1340 1095,1335 1125,1320 1125,1295 1140,1285 1145,1320 1165,1322",
    "1250,1155 1215,1185 1205,1240 1195,1300 1170,1325 1160,1360 1140,1380 1160,1385 1175,1420 1195,1445 1250,1470 1290,1468 1315,1465 1300,1501",
    "1100,1470 1140,1465 1150,1475 1195,1450",
    "1170,1501 1180,1475 1175,1460",
    "1210,1235 1240,1228 1285,1235 1335,1280 1315,1300 1320,1312 1340,1310",
    "1320,1312 1360,1350 1410,1372 1435,1378",
    "160,1258 205,1265 215,1258 165,1250",
    "158,1280 230,1275 262,1285 252,1255 250,1225 240,1210",
    "262,1285 310,1285 320,1325 330,1340",
    "195,1305 200,1290 230,1278",
    "340,1455 340,1425 320,1410 325,1385 320,1360 330,1325 365,1325 400,1332 410,1325 430,1330 425,1410 435,1435",
    "225,1340 265,1338 280,1370 262,1400",
    "280,1370 300,1370 300,1400",
    "430,1330 435,1310 500,1310 520,1300 515,1280 495,1250 495,1222",
    "487,1312 500,1350 502,1400 510,1420",
    "500,1312 520,1345 522,1415",
    "520,1300 545,1285 560,1275",
  ],
  D: [
    "0,275 20,245 45,240 60,250 70,240 90,248 120,280 118,265 130,272 150,265 180,270 200,262 225,280 260,278 270,258 235,232 258,222 255,210 278,195 255,188 262,160 300,155 350,145",
    "468,145 475,155 500,155 515,170 530,165 532,178 550,165 575,170 585,155 595,143 580,150 615,185 660,270 680,257 690,265 735,268 765,305 785,310 800,305 820,328",
    "820,328 805,330 800,345 783,350 778,400 722,392 710,430 710,450 658,462 670,475 675,520 665,545",
    "828,328 830,318 860,305 910,275 930,280 965,280 970,300 1025,307 1048,290 1038,260 1060,227 1085,240 1130,250 1135,270 1155,292 1180,292 1200,283 1250,300 1265,320 1320,327 1355,315 1390,290 1420,300 1440,305 1465,315 1495,300 1500,260 1525,228 1525,212 1510,205 1530,185 1568,180",
    "1440,305 1430,335 1415,360 1425,375 1440,368 1450,375 1465,365 1490,375 1508,408 1455,412 1440,435 1400,445 1380,467 1340,458 1330,480 1338,500 1305,530 1245,535 1190,560 1155,550 1110,530 1008,527 985,485 945,460 888,453 895,420 880,375 835,355 828,328",
    "148,570 148,460 205,442 240,465 275,503 330,500 340,497 360,530 362,560 410,585",
    "75,552 105,540 135,570 172,568",
    "195,530 205,545 235,575 275,575 290,615 330,645 375,660 375,680",
    "410,585 420,570 440,560 480,530 510,530 540,513 575,520 580,525 620,522 650,545 665,545 660,548 620,565 590,590 560,597 550,618 500,620 470,605 430,615",
    "430,615 415,605 430,590 445,580 470,590 465,605",
    "105,690 120,672 140,660 178,655 182,665 215,675 245,700 260,700 262,735 285,735 310,718 320,700 345,682 375,680 400,685 420,680 450,665 470,650 480,680 480,700",
    "262,735 245,770 250,830 272,838 270,850 252,875 300,885 365,880 370,850 390,840 410,845 440,815 440,790 465,755 480,740 470,710 490,693 555,688 575,703",
    "400,685 412,655 390,625 415,622 430,615",
    "525,620 528,648 550,655 552,690",
    "252,875 285,900 290,930 305,940 275,955 268,990",
    "560,815 545,825 535,860 520,880 490,918 465,922 440,935 435,950 462,970 470,1005 445,1010 405,1012",
    "625,815 635,788 633,830",
    "690,860 740,895 780,905 830,920 832,960 790,950 740,940 700,915 685,895 690,860",
    "838,925 860,915",
    "835,955 850,985 838,1000 850,1030 852,1068",
    "838,955 865,965 870,975",
    "905,1045 920,1065 930,1090 935,1035 945,1000 975,965 990,950 1020,940 1035,908 1058,930 1058,985 1045,1000 1070,1045 1090,1075 1120,1075 1135,1050 1165,1050 1200,1035 1230,1045 1230,1065 1255,1075",
    "910,1035 915,1060",
    "1110,1072 1090,1100 1060,1105 1035,1120 1030,1145 1058,1190 1045,1220 1078,1285 1055,1335",
    "1100,1105 1110,1165 1140,1150 1175,1165 1188,1190 1190,1210 1140,1240 1135,1260 1150,1290",
    "1120,1075 1155,1098 1190,1110 1165,1125 1200,1160 1245,1205 1245,1282 1220,1295 1210,1320 1185,1325",
    "1088,1408 1110,1420 1130,1420",
    "52,1010 75,1040 130,1048 145,1005 155,990",
    "130,1048 130,1110 65,1133 0,1143",
    "65,1133 88,1185",
  ],
  E: [
    "0,325 30,318 63,290 85,300 105,298 135,315 168,298 170,268 185,240 203,225 202,212 187,210 190,200 205,185 263,176 290,192 305,192 325,225 333,265 348,290 348,310 370,312 385,320 388,318 413,340 415,375 455,374 465,360 503,355 503,373 487,385 485,420 465,460 440,450 423,463 428,510 415,537 405,522 395,530",
    "113,305 88,360 100,375 125,368 130,375 140,365 155,365 180,390 183,405 130,412 110,420 103,440 85,448 70,445 48,465 12,457 2,480 10,500",
    "320,668 335,655 362,650",
  ],
};

const states: Record<TileKey, string[]> = {
  A: [
    "1072,142 1072,185 1110,215 1165,280 1170,300 1180,332",
    "1248,142 1245,333",
    "1378,142 1375,333",
    "1500,160 1530,142",
    "1070,550 1175,550 1175,690",
    "1070,550 1070,640 1180,770",
    "1175,440 1190,480 1220,478 1222,460 1340,460",
    "1340,333 1340,690",
    "1220,478 1220,578 1340,578",
    "1172,690 1500,690",
    "1255,690 1255,835",
    "1355,702 1408,702 1410,755 1500,775",
    "1340,520 1430,525 1470,540",
    "1455,333 1465,440",
    "1370,578 1480,580 1500,600 1500,690 1505,800 1510,870",
  ],
  B: [
    "262,258 262,380 275,420 350,455",
    "490,142 525,240 565,240 570,205",
    "565,232 705,232",
    "0,535 95,535",
    "0,700 330,700",
    "75,745 260,742",
    "88,745 85,850",
    "145,745 155,820 160,868",
    "205,745 235,810",
    "145,560 150,640 110,690",
    "50,745 25,830",
  ],
  C: [],
  D: [
    "525,760 560,730 600,750 640,720 660,740 640,790 560,800 525,780",
    "870,930 940,925 990,890 1020,900",
  ],
  E: [],
};

type Kind = "country" | "small" | "city" | "ocean" | "sea";
type Label = [TileKey, string, number, number, number, Kind?];
const labels: Label[] = [
  ["A", "Calgary", 1120, 1222, 247, "city"],
  ["A", "Vancouver", 950, 1085, 306, "city"],
  ["A", "San Francisco", 842, 1024, 658, "city"],
  ["A", "Houston", 1374, 1479, 867, "city"],
  ["A", "United States", 1350, 1537, 628],
  ["A", "Mexico", 1317, 1415, 1022],
  ["A", "North", 262, 465, 635, "ocean"],
  ["A", "Pacific", 236, 492, 738, "ocean"],
  ["A", "Ocean", 256, 470, 839, "ocean"],
  ["B", "Quebec", 370, 483, 386, "city"],
  ["B", "Toronto", 273, 390, 490, "city"],
  ["B", "Boston", 437, 541, 529, "city"],
  ["B", "New York", 379, 523, 623, "city"],
  ["B", "Washington", 221, 400, 685, "city"],
  ["B", "Cuba", 226, 309, 1068],
  ["B", "Guatemala", -25, 119, 1213, "small"],
  ["B", "Nicaragua", 88, 223, 1286, "small"],
  ["B", "Caracas", 449, 573, 1303, "city"],
  ["B", "Guyana", 619, 717, 1432, "small"],
  ["B", "Colombia", 311, 466, 1488],
  ["B", "North", 992, 1232, 513, "ocean"],
  ["B", "Atlantic", 937, 1282, 614, "ocean"],
  ["B", "Ocean", 985, 1240, 716, "ocean"],
  ["C", "Kingdom", 368, 514, 177],
  ["C", "Berlin", 648, 741, 200, "city"],
  ["C", "London", 362, 474, 288, "city"],
  ["C", "Poland", 813, 926, 230],
  ["C", "Belarus", 979, 1106, 179],
  ["C", "Samara", 1418, 1538, 170, "city"],
  ["C", "Czechia", 740, 843, 311, "small"],
  ["C", "Ukraine", 1042, 1172, 326],
  ["C", "France", 484, 598, 375],
  ["C", "Austria", 723, 819, 381, "small"],
  ["C", "Moldova", 998, 1108, 394, "small"],
  ["C", "Serbia", 855, 942, 486, "small"],
  ["C", "Italy", 704, 774, 536],
  ["C", "Istanbul", 1000, 1121, 560, "city"],
  ["C", "Azerbaijan", 1360, 1502, 598, "small"],
  ["C", "Spain", 362, 453, 573],
  ["C", "Greece", 902, 1017, 648],
  ["C", "Turkey", 1128, 1240, 636],
  ["C", "Tunisia", 620, 735, 769],
  ["C", "Syria", 1206, 1290, 745],
  ["C", "Morocco", 301, 438, 815],
  ["C", "Cairo", 1117, 1198, 858, "city"],
  ["C", "Algeria", 481, 600, 920],
  ["C", "Libya", 801, 887, 947],
  ["C", "Egypt", 1033, 1125, 960],
  ["C", "Kuwait", 1383, 1474, 891, "small"],
  ["C", "Western", 162, 272, 987, "small"],
  ["C", "Sahara", 170, 264, 1024, "small"],
  ["C", "Mauritania", 193, 368, 1119],
  ["C", "Mali", 429, 498, 1173],
  ["C", "Niger", 628, 719, 1172],
  ["C", "Chad", 816, 897, 1218],
  ["C", "Sudan", 1031, 1133, 1252],
  ["C", "Eritrea", 1204, 1297, 1211, "small"],
  ["C", "Yemen", 1373, 1485, 1206],
  ["C", "Senegal", 130, 260, 1222],
  ["C", "Burkina Faso", 370, 545, 1287, "small"],
  ["C", "Guinea", 225, 316, 1320, "small"],
  ["C", "Nigeria", 589, 708, 1346],
  ["C", "Ivory Coast", 309, 455, 1385, "small"],
  ["C", "Central African", 792, 993, 1393, "small"],
  ["C", "Republic", 835, 951, 1431, "small"],
  ["C", "Ethiopia", 1205, 1337, 1368],
  ["C", "Abidjan", 351, 466, 1481, "city"],
  ["D", "Kazakhstan", 287, 492, 364],
  ["D", "Mongolia", 1070, 1230, 407],
  ["D", "Uzbekistan", 204, 400, 560],
  ["D", "Kyrgyzstan", 446, 642, 568],
  ["D", "Turkmenistan", 99, 345, 635],
  ["D", "Iran", 78, 148, 810],
  ["D", "Afghanistan", 258, 468, 777],
  ["D", "Pakistan", 322, 474, 919],
  ["D", "China", 1075, 1176, 734],
  ["D", "Nepal", 693, 795, 918],
  ["D", "Bhutan", 831, 932, 938, "small"],
  ["D", "Bangladesh", 771, 977, 1012],
  ["D", "Karachi", 250, 375, 1034, "city"],
  ["D", "Mumbai", 367, 499, 1121, "city"],
  ["D", "Bengaluru", 522, 695, 1251, "city"],
  ["D", "India", 584, 671, 1062],
  ["D", "Oman", 121, 223, 1081],
  ["D", "Laos", 1099, 1182, 1115],
  ["D", "Vietnam", 1189, 1333, 1242],
  ["D", "Arabian", 225, 383, 1221, "sea"],
  ["D", "Sea", 268, 338, 1272, "sea"],
  ["D", "Sri Lanka", 591, 757, 1390],
  ["D", "Malaysia", 1058, 1210, 1457],
  ["D", "Maldives", 439, 594, 1485],
  ["E", "Democratic", 250, 415, 562, "small"],
  ["E", "People's Republic", 204, 460, 600, "small"],
  ["E", "of Korea", 273, 391, 637, "small"],
  ["E", "Taiwan", 156, 257, 1025, "small"],
  ["E", "Philippines", 149, 347, 1299],
];
const labelStyle: Record<Kind, [number, string, number]> = {
  country: [16.5, "#787878", 500],
  small: [14, "#6e6e6e", 500],
  city: [16.5, "#cdcdcd", 400],
  ocean: [31, "#6c6c6c", 400],
  sea: [16.5, "#646464", 400],
};
const places: [TileKey, number, number, boolean?][] = [
  ["A", 1171, 264], ["A", 1018, 324], ["A", 1030, 668], ["A", 1486, 877],
  ["B", 425, 404], ["B", 264, 500], ["B", 428, 540], ["B", 370, 587],
  ["B", 310, 637, true], ["B", 510, 1323, true],
  ["C", 752, 212, true], ["C", 485, 248, true], ["C", 1478, 188],
  ["C", 1060, 578], ["C", 1105, 870, true], ["C", 408, 1436],
  ["D", 383, 996], ["D", 508, 1131], ["D", 608, 1268],
];
const pins: [string, number, number, number?][] = [
  ["594", 553.5, 669.5, 53],
  ["1", 794.5, 687],
  ["15", 914.5, 750, 39],
  ["8", 573.5, 809.5, 39],
  ["1", 917, 1053.5],
  ["8", 1670.5, 618.5, 39],
  ["25", 1726, 685, 39],
  ["1", 1644.5, 784],
  ["1", 2030, 908],
  ["1", 2308, 867.5],
  ["1", 2644, 748],
  ["1", 2681.5, 842],
  ["1", 2624.5, 932],
  ["1", 2626, 1092],
  ["4", 2760, 805.5, 39],
  ["3", 2843, 797, 39],
];

const Shapes = ({ set, line, fill }: { set: Record<TileKey, string[]>; line?: string; fill?: string }) => (
  <>
    {keys.map((k) => (
      <g key={k} transform={`translate(${tiles[k][0]} 500) scale(${tiles[k][1]} ${KY})`}>
        {set[k].map((p, i) =>
          line ? (
            <polyline key={i} points={p} fill="none" stroke={line} strokeWidth={1.2} vectorEffect="non-scaling-stroke" />
          ) : (
            <polygon key={i} points={p} fill={fill} />
          )
        )}
      </g>
    ))}
  </>
);

const WorldMap = () => (
  <MapSvg viewBox="31 558 3174 555">
    <Shapes set={land} fill={c.land} />
    <Shapes set={lakes} fill={c.water} />
    <Shapes set={states} line="#3d3c3a" />
    <Shapes set={borders} line={c.border} />
    {places.map(([t, x, y, ring], i) => (
      <g key={i}>
        <circle cx={tx(t, x)} cy={ty(y)} r={4.5} fill={c.water} />
        {ring && <circle cx={tx(t, x)} cy={ty(y)} r={4} fill="none" stroke="#c9c9c9" strokeWidth={1.3} />}
        <circle cx={tx(t, x)} cy={ty(y)} r={ring ? 1.8 : 2.8} fill="#e4e4e4" />
      </g>
    ))}
    {labels.map(([t, text, x1, x2, y, kind = "country"], i) => {
      const [size, fill, weight] = labelStyle[kind];
      const spaced = kind === "ocean" || kind === "sea";
      return (
        <text
          key={i}
          x={tx(t, x1)}
          y={ty(y)}
          textLength={tx(t, x2) - tx(t, x1)}
          lengthAdjust={spaced ? "spacing" : "spacingAndGlyphs"}
          fontFamily="Roboto, sans-serif"
          fontSize={size}
          fontWeight={weight}
          fontStyle={spaced ? "italic" : "normal"}
          fill={fill}
          stroke="#232323"
          strokeWidth={spaced ? 0 : 2.4}
          strokeLinejoin="round"
          paintOrder="stroke"
        >
          {text}
        </text>
      );
    })}
  </MapSvg>
);

/* ---------- icons ---------- */
const Clock = ({ mr }: { mr: number }) => (
  <Icon width={20} height={20} viewBox="0 0 20 20" $mr={mr} fill="none" stroke={c.icon}>
    <circle cx="10" cy="10" r="8.4" strokeWidth="2.2" />
    <path d="M10.6 5v5.6H6" strokeWidth="1.6" />
  </Icon>
);
const Refresh = ({ mr }: { mr: number }) => (
  <Icon width={20} height={20} viewBox="0 0 20 20" $mr={mr} fill="none" stroke={c.icon} strokeWidth="2.2">
    <path d="M1.3 8.2A8.9 8.9 0 0 1 16.6 4.2" />
    <path d="M18.7 11.8A8.9 8.9 0 0 1 3.4 15.8" />
    <path d="M20 .3v7.4h-7.2z M0 19.7v-7.4h7.2z" fill={c.icon} stroke="none" />
  </Icon>
);
const Dots = ({ mr }: { mr: number }) => (
  <Icon width={6} height={20} viewBox="0 0 6 20" $mr={mr} fill={c.icon}>
    <circle cx="3" cy="3" r="2.8" />
    <circle cx="3" cy="10" r="2.8" />
    <circle cx="3" cy="17" r="2.8" />
  </Icon>
);
const Share = () => (
  <Icon width={21} height={21} viewBox="0 0 21 21" fill="none" stroke={c.icon} strokeWidth="1.8">
    <path d="M14 4.500V1H1v19h13v-3.500" />
    <path d="M5 16.500C5 10.500 8 8 14.500 8" strokeWidth="2.4" />
    <path d="M14 3l7 5-7 5z" fill={c.icon} stroke="none" />
  </Icon>
);

/* ---------- chart ---------- */
const AxisText = ({ x, y, w, bold, children }: { x: number; y: number; w: number; bold?: boolean; children: string }) => (
  <text
    x={x - w / 2}
    y={y}
    textLength={w}
    lengthAdjust="spacingAndGlyphs"
    fontFamily={SANS}
    fontSize={14.5}
    fontWeight={bold ? 600 : 400}
    fill="#dfe4ea"
  >
    {children}
  </text>
);
const bars: [number, string, number, string, number][] = [
  [1804, "#52a038", 1587.5, "S3", 19],
  [2312.7, "#52a038", 1637, "consumer-app-pg", 128],
  [2821, "#3576b4", 1637, "consumer-app-pg-dev", 160],
];
const ChartSvg = styled.svg`
  display: block;
  width: 1566px;
  height: 270px;
`;
const Chart = () => (
  <ChartSvg viewBox="1639 1475 1566 270">
    <path d="M1662 1489.5H3192M1662 1588.5H3192" stroke="#32425e" strokeWidth="1.7" />
    <path d="M1662 1685.5H3192" stroke="#364664" strokeWidth="2.2" />
    {bars.map(([x, fill, top, label, w]) => (
      <g key={label}>
        <rect x={x} y={top} width={235} height={1685.5 - top} fill={fill} />
        <path d={`M${x + 117.7} 1686v6`} stroke="#33425f" strokeWidth="1.4" />
        <AxisText x={x + 117.7} y={1704} w={w}>{label}</AxisText>
      </g>
    ))}
    <rect x={1804} y={1637} width={235} height={48.5} fill="#accce0" />
    <AxisText x={1650} y={1493.7} w={9.5}>4</AxisText>
    <AxisText x={1650} y={1592.3} w={9.5}>2</AxisText>
    <AxisText x={1650} y={1690} w={9.5}>0</AxisText>
    <AxisText x={2430} y={1727.7} w={76} bold>repo.name</AxisText>
  </ChartSvg>
);

const filters: [string, number, number][] = [
  ["repo_name", 169, -0.16],
  ["clientApplication", 212, -0.33],
  ["SSO_User", 163, 0.42],
  ["SSO_Group", 176, 0.42],
];

const Stat = ({ title, value, ls }: { title: string; value: string; ls?: number }) => (
  <Panel>
    <PanelHead>
      <PanelTitle $ls={ls}>{title}</PanelTitle>
    </PanelHead>
    <Big>{value}</Big>
  </Panel>
);

export default function App() {
  return (
    <Page>
      <GlobalStyle />
      <Header>
        <Heading>Cyral - Data Activity Logs Standard Dashboard</Heading>
        <Share />
        <Saved>All changes saved</Saved>
        <Tools>
          <Clock mr={7} />
          <Range $w={61}>-24h</Range>
          <Refresh mr={8} />
          <Icon width={14} height={8} viewBox="0 0 14 8" $mr={24} fill="none" stroke={c.icon} strokeWidth="1.8">
            <path d="M.8.8L7 7L13.2.8" />
          </Icon>
          <Icon width={19} height={21} viewBox="0 0 19 21" $mr={30} fill={c.blue}>
            <path d="M0 0h19v2H0zM.5 3.6h18L12 11v10l-3.8-3.500V11z" />
          </Icon>
          <Dots mr={29} />
          <AddPanel>Add Panel</AddPanel>
        </Tools>
      </Header>
      <Filters>
        {filters.map(([name, w, ls]) => (
          <Filter key={name} $w={w} $ls={ls}>
            {name}
            <FilterValue>*</FilterValue>
          </Filter>
        ))}
        <Plus>
          <Icon width={16} height={16} viewBox="0 0 16 16" stroke="#7d93ab" strokeWidth="2">
            <path d="M8 0v16M0 8h16" />
          </Icon>
        </Plus>
      </Filters>
      <Body>
        <Board>
          <Banner>System Summary</Banner>
          <Row $h={277}>
            <Stat title="Number of Repositories" value="3" ls={-0.2} />
            <Stat title="Number of Sidecars" value="2" ls={-0.2} />
            <Stat title="Number of Registered Repository Accounts" value="12" ls={-0.2} />
            <Stat title="Average Connections Per Timeframe" value="1" />
          </Row>
          <Row $h={620} $mb={1}>
            <Panel>
              <Grip />
              <PanelHead>
                <PanelTitle $ls={-0.32}>Connection Activity by Geography</PanelTitle>
                <PanelTools>
                  <Refresh mr={8} />
                  <Clock mr={7} />
                  <Range $w={47}>-24h</Range>
                  <Dots mr={0} />
                </PanelTools>
              </PanelHead>
              <MapBox>
                <WorldMap />
                {pins.map(([n, x, y, glow], i) => (
                  <Pin key={i} $x={x} $y={y} $r={glow ?? 27.3} $glow={!!glow} $c={n === "594" ? c.orange : c.yellow}>
                    {n}
                  </Pin>
                ))}
                <Logo width={120} height={36} viewBox="0 0 120 36">
                  <circle cx="15.3" cy="15.3" r="12.6" fill="#ecebea" />
                  <path d="M9.5 21.5c-.8-5 .2-9.300 3-11.600a6.800 6.800 0 0 1 9.600 9.200c-2.400 2.900-7.300 3.600-12.600 2.400z" fill={c.water} />
                  <path d="M16.8 10.800l1.200 2.700 2.700 1.100-2.700 1.200-1.200 2.700-1.100-2.700-2.700-1.200 2.700-1.100z" fill="#ecebea" />
                  <text x="32.5" y="22" fontFamily="Lato, sans-serif" fontSize="25" fontWeight="700" textLength="81" lengthAdjust="spacingAndGlyphs" fill="#ecebea">
                    mapbox
                  </text>
                </Logo>
                <Legend>
                  <LegendTitle>_count</LegendTitle>
                  <LegendRow $c="#9bc13c">&lt; 1</LegendRow>
                  <LegendRow $c={c.yellow}>1 - 593</LegendRow>
                  <LegendRow $c={c.orange}>&gt;= 594</LegendRow>
                </Legend>
                <Credit>
                  <span>© Mapbox © OpenStreetMap</span>
                  <b>Improve this map</b>
                </Credit>
              </MapBox>
              <Resize />
            </Panel>
          </Row>
          <Row $h={276}>
            <Stat title="Number of Active Users" value="3" ls={-0.3} />
            <Stat title="Number of Active SSO Groups" value="3" ls={-0.17} />
          </Row>
          <Row $h={334}>
            <Panel>
              <PanelHead>
                <PanelTitle>Number of Users in each SSO Group</PanelTitle>
              </PanelHead>
              <Table>
                <Tr $head>
                  <No />
                  <Cell $ls={-0.17}>identity.group</Cell>
                  <CountCell $head>_count_distinct</CountCell>
                </Tr>
                {["Data Scientist", "Engineer", "Business Analyst"].map((g, i) => (
                  <Tr key={g}>
                    <No>{i + 1}</No>
                    <Cell>{g}</Cell>
                    <CountCell>1</CountCell>
                  </Tr>
                ))}
              </Table>
            </Panel>
            <Panel>
              <PanelHead>
                <PanelTitle $ls={-0.16}>Repository Connections by SSO Group</PanelTitle>
              </PanelHead>
              <Chart />
            </Panel>
          </Row>
          <Row $h={120}>
            <Panel>
              <PanelHead>
                <PanelTitle $ls={-0.28}>Recent Access Approvals</PanelTitle>
              </PanelHead>
            </Panel>
          </Row>
        </Board>
        <Track>
          <Thumb />
        </Track>
      </Body>
    </Page>
  );
}
